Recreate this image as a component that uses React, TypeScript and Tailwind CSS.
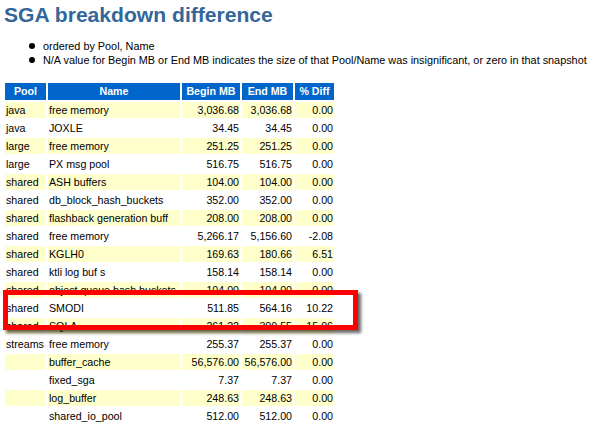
import React from "react"

type Row = {
  pool: string
  name: string
  begin: string
  end: string
  diff: string
}

const rows: Row[] = [
  { pool: "java", name: "free memory", begin: "3,036.68", end: "3,036.68", diff: "0.00" },
  { pool: "java", name: "JOXLE", begin: "34.45", end: "34.45", diff: "0.00" },
  { pool: "large", name: "free memory", begin: "251.25", end: "251.25", diff: "0.00" },
  { pool: "large", name: "PX msg pool", begin: "516.75", end: "516.75", diff: "0.00" },
  { pool: "shared", name: "ASH buffers", begin: "104.00", end: "104.00", diff: "0.00" },
  { pool: "shared", name: "db_block_hash_buckets", begin: "352.00", end: "352.00", diff: "0.00" },
  { pool: "shared", name: "flashback generation buff", begin: "208.00", end: "208.00", diff: "0.00" },
  { pool: "shared", name: "free memory", begin: "5,266.17", end: "5,156.60", diff: "-2.08" },
  { pool: "shared", name: "KGLH0", begin: "169.63", end: "180.66", diff: "6.51" },
  { pool: "shared", name: "ktli log buf s", begin: "158.14", end: "158.14", diff: "0.00" },
  { pool: "shared", name: "object queue hash buckets", begin: "104.00", end: "104.00", diff: "0.00" },
  { pool: "shared", name: "SMODI", begin: "511.85", end: "564.16", diff: "10.22" },
  { pool: "shared", name: "SQLA", begin: "261.22", end: "300.55", diff: "15.06" },
  { pool: "streams", name: "free memory", begin: "255.37", end: "255.37", diff: "0.00" },
  { pool: "", name: "buffer_cache", begin: "56,576.00", end: "56,576.00", diff: "0.00" },
  { pool: "", name: "fixed_sga", begin: "7.37", end: "7.37", diff: "0.00" },
  { pool: "", name: "log_buffer", begin: "248.63", end: "248.63", diff: "0.00" },
  { pool: "", name: "shared_io_pool", begin: "512.00", end: "512.00", diff: "0.00" },
]

const headers = ["Pool", "Name", "Begin MB", "End MB", "% Diff"]

const notes = [
  "ordered by Pool, Name",
  "N/A value for Begin MB or End MB indicates the size of that Pool/Name was insignificant, or zero in that snapshot",
]

export default function App() {
  return (
    <div className="relative w-[599px] h-[431px] bg-white overflow-hidden font-['Liberation_Sans',Arial,sans-serif] text-black">
      {/* title */}
      <h2 className="pt-[3px] pl-[4px] text-[21.1px] leading-[24px] font-bold text-[#336699] whitespace-nowrap">
        SGA breakdown difference
      </h2>

      {/* notes */}
      <ul className="mt-[12px] text-[10.85px] leading-[14px]">
        {notes.map((note, i) => (
          <li key={i} className="flex items-center whitespace-nowrap">
            <span className="ml-[29px] mr-[8px] h-[6px] w-[6px] rounded-full bg-black shrink-0" />
            <span>{note}</span>
          </li>
        ))}
      </ul>

      {/* table */}
      <div className="mt-[16px] ml-[5px] grid grid-cols-[41px_132px_58px_51px_39px] gap-[2px] text-[10.67px] whitespace-nowrap">
        {headers.map((h) => (
          <div key={h} className="h-[17px] leading-[17px] bg-[#0066CC] text-white font-bold text-center">
            {h}
          </div>
        ))}
        {rows.map((r, i) => {
          const bg = i % 2 === 0 ? "bg-[#FFFFCC]" : "bg-white"
          return (
            <React.Fragment key={i}>
              <div className={`h-[16px] leading-[16px] pl-[1px] ${bg}`}>{r.pool}</div>
              <div className={`h-[16px] leading-[16px] pl-[1px] ${bg}`}>{r.name}</div>
              <div className={`h-[16px] leading-[16px] pr-[1px] text-right ${bg}`}>{r.begin}</div>
              <div className={`h-[16px] leading-[16px] pr-[1px] text-right ${bg}`}>{r.end}</div>
              <div className={`h-[16px] leading-[16px] pr-[1px] text-right ${bg}`}>{r.diff}</div>
            </React.Fragment>
          )
        })}
      </div>

      {/* highlight frame drawn over the table */}
      <div className="absolute left-[3px] top-[290px] w-[355px] h-[40px] border-[5px] border-[#ff0000] shadow-[3px_3px_3px_rgba(0,0,0,0.6)] pointer-events-none" />
    </div>
  )
}
